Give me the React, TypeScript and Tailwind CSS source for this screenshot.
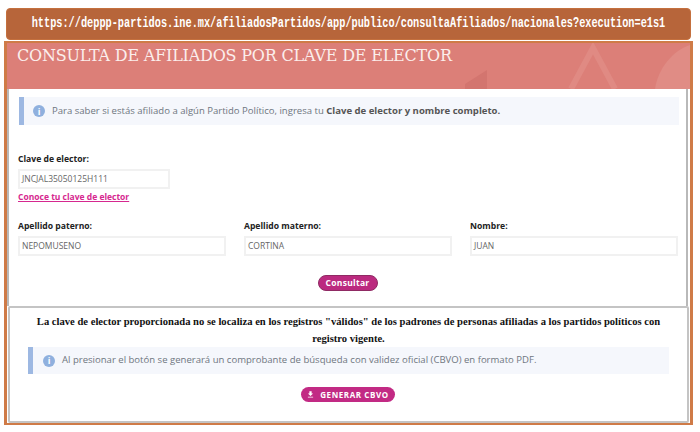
import { MdFileDownload } from 'react-icons/md';

const openSans = "font-['Open_Sans','Noto_Sans',sans-serif]";

function Notice({ children, className }: { children: React.ReactNode; className: string }) {
  return (
    <div className={`flex items-center border-l-[5px] border-[#9db8e2] bg-[#f5f7fc] text-[9.55px] text-[#6f7680] ${className}`}>
      <span className="flex h-[12px] w-[12px] shrink-0 items-center justify-center rounded-full bg-[#8fb0de]">
        <span className="text-[9px] leading-none font-bold text-white">i</span>
      </span>
      {children}
    </div>
  );
}

function Field({ label, value, className }: { label: string; value: string; className: string }) {
  return (
    <div className={className}>
      <label className="block h-[14px] text-[8.6px] leading-[14px] font-bold text-[#222]">{label}</label>
      <div className="mt-[3px] flex h-[20px] items-center border-2 border-[#f1f1f1] bg-white pl-[2px] text-[8.5px] text-[#666]">
        {value}
      </div>
    </div>
  );
}

export default function App() {
  return (
    <div className={`h-[432px] w-[700px] overflow-hidden bg-white pt-[8px] pl-[6px] ${openSans}`}>
      <div className="flex h-[32px] w-[685px] items-center justify-center rounded-[4px] border border-[#c4703e] bg-[#b7653a]">
        <span className="font-['Liberation_Mono',monospace] text-[10.25px] font-bold whitespace-nowrap text-white [transform:scaleY(1.45)]">
          https://deppp-partidos.ine.mx/afiliadosPartidos/app/publico/consultaAfiliados/nacionales?execution=e1s1
        </span>
      </div>

      <div className="mt-[1px] -ml-[2px] h-[384px] w-[689px] border-x-[3px] border-y-2 border-[#cf7b47]">
        <header className="relative h-[46px] overflow-hidden bg-[#dc7f78] pl-[10px]">
          <svg className="absolute top-0 right-0 h-[46px] w-[240px]" viewBox="0 0 240 46" aria-hidden="true">
            <path d="M121 46 L143 5 L165 46" fill="none" stroke="#e08a83" strokeWidth="6" />
            <path d="M240 2 C222 8 208 26 205 46 L240 46 Z" fill="#e08c85" />
            <path d="M15 46 L15 41 L37 27 L37 46 Z" fill="#d3756f" />
          </svg>
          <h1 className="relative pt-[1px] font-['DejaVu_Serif',serif] text-[16px] leading-[24px] tracking-[-0.2px] text-[#fbeeec]">
            CONSULTA DE AFILIADOS POR CLAVE DE ELECTOR
          </h1>
        </header>

        <div className="mr-[2px] h-[212px] border-x-2 border-[#b9b9b9] bg-white pt-[8px] pr-[7px] pl-[10px]">
          <Notice className="h-[28px] gap-[7px] pl-[9px]">
            <span>
              Para saber si estás afiliado a algún Partido Político, ingresa tu{' '}
              <strong className="text-[#555]">Clave de elector y nombre completo.</strong>
            </span>
          </Notice>

          <div className="-ml-[1px]">
            <Field label="Clave de elector:" value="JNCJAL35050125H111" className="mt-[27px] w-[152px]" />
            <a className="mt-[1px] block text-[8.5px] leading-[14px] font-bold text-[#d6288f] underline">
              Conoce tu clave de elector
            </a>

            <div className="mt-[15px] flex gap-[18px]">
              <Field label="Apellido paterno:" value="NEPOMUSENO" className="w-[208px]" />
              <Field label="Apellido materno:" value="CORTINA" className="w-[208px]" />
              <Field label="Nombre:" value="JUAN" className="w-[208px]" />
            </div>
          </div>

          <div className="mt-[19px] flex justify-center pr-[3px]">
            <button className="flex h-[16px] w-[60px] items-center justify-center rounded-full border border-[#8f2a63] bg-[#bb2a7f] text-[8.5px] font-bold tracking-[0.3px] text-white">
              Consultar
            </button>
          </div>
        </div>

        <div className="mr-[2px] h-[5px] border-x-2 border-[#b9b9b9] bg-white" />

        <section className="mx-[1px] h-[117px] rounded-[2px] border-2 border-[#c4c4c4] bg-white pt-[5px] pl-[18px]">
          <p className="w-[641px] text-center font-['Liberation_Serif',serif] text-[10.6px] leading-[17px] font-bold text-[#111]">
            La clave de elector proporcionada no se localiza en los registros "válidos" de los padrones de personas afiliadas a los partidos políticos con registro vigente.
          </p>
          <Notice className="h-[27px] w-[641px] gap-[7px] pl-[10px]">
            <span>Al presionar el botón se generará un comprobante de búsqueda con validez oficial (CBVO) en formato PDF.</span>
          </Notice>
          <div className="mt-[13px] flex w-[639px] justify-center">
            <button className="flex h-[15px] w-[94px] items-center justify-center gap-[5px] rounded-full bg-[#c22a84] text-[8px] font-bold tracking-[0.6px] text-white">
              <MdFileDownload size={9} />
              GENERAR CBVO
            </button>
          </div>
        </section>
      </div>
    </div>
  );
}
